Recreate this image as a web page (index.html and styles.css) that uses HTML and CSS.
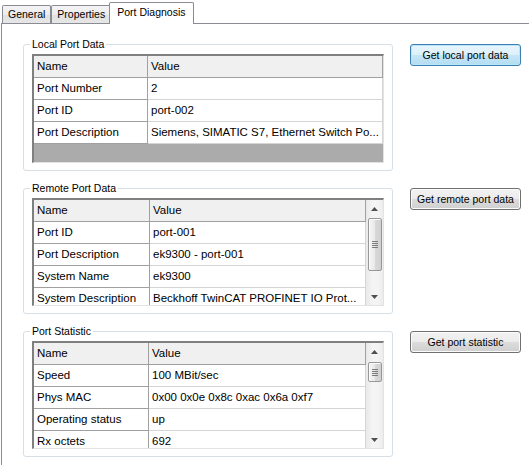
FILE: index.html
```html
<!DOCTYPE html>
<html>
<head>
<meta charset="utf-8">
<title>Port Diagnosis</title>
<link rel="stylesheet" href="styles.css">
</head>
<body>
<div class="tabs">
  <div class="tab">General</div>
  <div class="tab">Properties</div>
  <div class="tab tab-active">Port Diagnosis</div>
</div>
<div class="panel">
  <div class="section">
    <fieldset class="group">
      <legend>Local Port Data</legend>
      <div class="grid grid-local">
        <div class="grid-body">
          <div class="row row-head"><div class="cell c-name">Name</div><div class="cell c-value">Value</div></div>
          <div class="row"><div class="cell c-name">Port Number</div><div class="cell c-value">2</div></div>
          <div class="row"><div class="cell c-name">Port ID</div><div class="cell c-value">port-002</div></div>
          <div class="row"><div class="cell c-name">Port Description</div><div class="cell c-value">Siemens, SIMATIC S7, Ethernet Switch Po...</div></div>
          <div class="filler"></div>
        </div>
      </div>
    </fieldset>
    <button class="btn btn-default">Get local port data</button>
  </div>

  <div class="section">
    <fieldset class="group">
      <legend>Remote Port Data</legend>
      <div class="grid grid-remote">
        <div class="grid-body">
          <div class="row row-head"><div class="cell c-name">Name</div><div class="cell c-value">Value</div></div>
          <div class="row"><div class="cell c-name">Port ID</div><div class="cell c-value">port-001</div></div>
          <div class="row"><div class="cell c-name">Port Description</div><div class="cell c-value">ek9300 - port-001</div></div>
          <div class="row"><div class="cell c-name">System Name</div><div class="cell c-value">ek9300</div></div>
          <div class="row"><div class="cell c-name">System Description</div><div class="cell c-value">Beckhoff TwinCAT PROFINET IO Prot...</div></div>
        </div>
        <div class="vscroll">
          <div class="sb-btn"><svg width="7" height="4" viewBox="0 0 7 4"><polygon points="0,4 3.5,0 7,4" fill="#505050"/></svg></div>
          <div class="sb-track">
            <div class="sb-thumb thumb-remote"><svg width="6" height="7" viewBox="0 0 6 7"><path d="M0 0.5h6M0 2.5h6M0 4.5h6M0 6.5h6" stroke="#7b7b7b" stroke-width="1"/></svg></div>
          </div>
          <div class="sb-btn"><svg width="7" height="4" viewBox="0 0 7 4"><polygon points="0,0 7,0 3.5,4" fill="#505050"/></svg></div>
        </div>
      </div>
    </fieldset>
    <button class="btn">Get remote port data</button>
  </div>

  <div class="section">
    <fieldset class="group">
      <legend>Port Statistic</legend>
      <div class="grid grid-stats">
        <div class="grid-body">
          <div class="row row-head"><div class="cell c-name">Name</div><div class="cell c-value">Value</div></div>
          <div class="row"><div class="cell c-name">Speed</div><div class="cell c-value">100 MBit/sec</div></div>
          <div class="row"><div class="cell c-name">Phys MAC</div><div class="cell c-value">0x00 0x0e 0x8c 0xac 0x6a 0xf7</div></div>
          <div class="row"><div class="cell c-name">Operating status</div><div class="cell c-value">up</div></div>
          <div class="row"><div class="cell c-name">Rx octets</div><div class="cell c-value">692</div></div>
        </div>
        <div class="vscroll">
          <div class="sb-btn"><svg width="7" height="4" viewBox="0 0 7 4"><polygon points="0,4 3.5,0 7,4" fill="#505050"/></svg></div>
          <div class="sb-track">
            <div class="sb-thumb thumb-stats"><svg width="6" height="7" viewBox="0 0 6 7"><path d="M0 0.5h6M0 2.5h6M0 4.5h6M0 6.5h6" stroke="#7b7b7b" stroke-width="1"/></svg></div>
          </div>
          <div class="sb-btn"><svg width="7" height="4" viewBox="0 0 7 4"><polygon points="0,0 7,0 3.5,4" fill="#505050"/></svg></div>
        </div>
      </div>
    </fieldset>
    <button class="btn">Get port statistic</button>
  </div>
</div>
</body>
</html>
```
FILE: styles.css
```css
* { box-sizing: border-box; }

html, body {
  margin: 0;
  padding: 0;
  background: #fff;
}

body {
  width: 529px;
  height: 465px;
  overflow: hidden;
  font-family: "Liberation Sans", Arial, sans-serif;
  color: #000;
}

/* ---- tab strip ---- */
.tabs {
  display: flex;
  align-items: flex-end;
  height: 23px;
  padding-left: 2px;
}

.tab {
  height: 18px;
  padding: 0 5px;
  border: 1px solid #898c95;
  border-bottom: none;
  border-radius: 2px 2px 0 0;
  background: linear-gradient(#f4f4f4, #ececec 50%, #e0e0e0 51%, #e6e6e6);
  font-size: 10.5px;
  line-height: 17px;
  white-space: nowrap;
}

.tab-active {
  position: relative;
  z-index: 1;
  height: 22px;
  margin: 0 -2px -1px;
  padding: 0 7px;
  background: #fff;
  line-height: 18px;
}

/* ---- panel ---- */
.panel {
  margin-left: 1px;
  border-top: 1px solid #898c95;
  border-left: 1px solid #898c95;
  padding: 14px 0 0 21px;
  display: flex;
  flex-direction: column;
  gap: 11px;
  height: 442px;
}

.section {
  display: flex;
  align-items: flex-start;
  gap: 17px;
}

/* ---- group box ---- */
.group {
  width: 370px;
  min-width: 0;
  margin: 0;
  padding: 3px 8px 7px;
  border: 1px solid #d5dfe5;
  border-radius: 3px;
}

.group legend {
  margin-left: -2px;
  padding: 0 2px;
  font-size: 10.5px;
  line-height: 13px;
}

/* ---- buttons ---- */
.btn {
  margin-top: 6px;
  width: 111px;
  height: 22px;
  padding: 0;
  font-family: inherit;
  font-size: 10.5px;
  color: #000;
  border: 1px solid #707070;
  border-radius: 3px;
  background: linear-gradient(#f2f2f2, #ebebeb 50%, #dddddd 50%, #cfcfcf);
  box-shadow: inset 0 0 0 1px #fbfbfb;
}

.btn-default {
  border-color: #3c7fb1;
  background: linear-gradient(#e8f5fc, #dcf0fa 50%, #c6e6f7 50%, #b4dcf2);
  box-shadow: inset 0 0 0 1px #b8e6fb;
}

/* ---- data grid ---- */
.grid {
  display: flex;
  height: 108px;
  border-style: solid;
  border-width: 2px 1px 1px 2px;
  border-color: #7f7f7f #e3e3e3 #e3e3e3 #7f7f7f;
  background: #fff;
  overflow: hidden;
  --nw: 115px;
}

.grid-local { height: 109px; --nw: 114px; }
.grid-remote { --nw: 116px; }
.grid-stats { --nw: 115px; }

.grid-body {
  flex: 1;
  min-width: 0;
  display: flex;
  flex-direction: column;
  overflow: hidden;
}

.row {
  display: flex;
  flex: none;
  height: 22px;
  font-size: 11.5px;
  line-height: 21px;
}

.cell {
  padding: 0 3px;
  white-space: nowrap;
  overflow: hidden;
  border-bottom: 1px solid #d5d5d5;
}

.c-name {
  flex: none;
  width: var(--nw);
  border-right: 1px solid #a0a0a0;
  border-bottom-color: #a0a0a0;
}

.c-value {
  flex: 1;
  min-width: 0;
  border-right: 1px solid #d5d5d5;
}

.row-head .cell {
  background: #f0f0f0;
  border-bottom-color: #a0a0a0;
}

.row-head .c-value { border-right-color: #a0a0a0; }

.filler {
  flex: 1;
  background: #ababab;
}

/* ---- scrollbar ---- */
.vscroll {
  flex: none;
  width: 17px;
  display: flex;
  flex-direction: column;
  background: linear-gradient(90deg, #e9e9e9, #f4f4f4 40%, #f4f4f4 70%, #ececec);
}

.sb-btn {
  height: 17px;
  flex: none;
  display: flex;
  align-items: center;
  justify-content: center;
}

.sb-btn svg { display: block; }

.sb-track { flex: 1; }

.sb-thumb {
  margin: 1px 1px 0 2px;
  border: 1px solid #979797;
  border-radius: 2px;
  background: linear-gradient(90deg, #f5f5f5, #e8e8e8 50%, #d9d9d9 51%, #d0d0d0);
  box-shadow: inset 1px 1px 0 #fcfcfc;
  display: flex;
  align-items: center;
  justify-content: center;
}

.sb-thumb svg { display: block; }

.thumb-remote { height: 53px; }
.thumb-stats { height: 20px; margin-top: 2px; }
```
